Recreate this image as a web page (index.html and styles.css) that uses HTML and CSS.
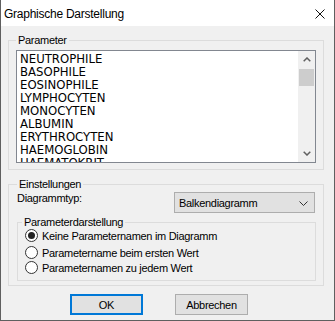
FILE: index.html
```html
<!DOCTYPE html>
<html>
<head>
<meta charset="utf-8">
<link rel="stylesheet" href="styles.css">
</head>
<body>
<div class="window">
  <div class="titlebar">
    <span class="title">Graphische Darstellung</span>
    <svg class="close" width="10" height="10" viewBox="0 0 10 10"><path d="M0.5 0.5 L9.5 9.5 M9.5 0.5 L0.5 9.5" stroke="#111" stroke-width="1" fill="none"/></svg>
  </div>
  <div class="content">
    <div class="group group-param">
      <div class="group-label">Parameter</div>
      <div class="listbox">
        <div class="list-items">
          <div class="item">NEUTROPHILE</div>
          <div class="item">BASOPHILE</div>
          <div class="item">EOSINOPHILE</div>
          <div class="item">LYMPHOCYTEN</div>
          <div class="item">MONOCYTEN</div>
          <div class="item">ALBUMIN</div>
          <div class="item">ERYTHROCYTEN</div>
          <div class="item">HAEMOGLOBIN</div>
          <div class="item">HAEMATOKRIT</div>
        </div>
        <div class="scrollbar">
          <div class="sb-btn"><svg width="8" height="5" viewBox="0 0 8 5"><polyline points="0.7,4.3 4,1 7.3,4.3" fill="none" stroke="#606060" stroke-width="1.5"/></svg></div>
          <div class="sb-track"><div class="sb-thumb"></div></div>
          <div class="sb-btn"><svg width="8" height="5" viewBox="0 0 8 5"><polyline points="0.7,0.7 4,4 7.3,0.7" fill="none" stroke="#606060" stroke-width="1.5"/></svg></div>
        </div>
      </div>
    </div>
    <div class="group group-settings">
      <div class="group-label">Einstellungen</div>
      <div class="type-row">
        <span class="type-label">Diagrammtyp:</span>
        <div class="combo">
          <span>Balkendiagramm</span>
          <svg width="9" height="5" viewBox="0 0 9 5"><polyline points="0.5,0.5 4.5,4.5 8.5,0.5" fill="none" stroke="#333" stroke-width="1"/></svg>
        </div>
      </div>
      <div class="group group-inner">
        <div class="group-label label-inner">Parameterdarstellung</div>
        <div class="radio radio-first"><span class="circle checked"></span><span class="radio-text">Keine Parameternamen im Diagramm</span></div>
        <div class="radio radio-second"><span class="circle"></span><span class="radio-text">Parametername beim ersten Wert</span></div>
        <div class="radio"><span class="circle"></span><span class="radio-text">Parameternamen zu jedem Wert</span></div>
      </div>
    </div>
    <div class="buttons">
      <div class="btn btn-default">OK</div>
      <div class="btn">Abbrechen</div>
    </div>
  </div>
</div>
</body>
</html>
```
FILE: styles.css
```css
* { box-sizing: border-box; }
html, body { margin: 0; padding: 0; background: #f0f0f0; }
.window {
  width: 335px;
  height: 321px;
  border: 1px solid #5f5f5f;
  border-top: none;
  background: #f0f0f0;
  font-family: "Liberation Sans", Arial, sans-serif;
  font-size: 11px;
  letter-spacing: -0.3px;
  color: #000;
  overflow: hidden;
}
.titlebar {
  height: 26px;
  background: #fff;
  display: flex;
  align-items: center;
  padding: 1px 9px 0 3px;
}
.title {
  font-size: 12px;
  letter-spacing: -0.25px;
  flex: 1;
}
.close { display: block; margin-top: 1px; }
.content {
  padding: 0 10px 0 7px;
}
.group {
  border: 1px solid #dcdcdc;
}
.group-label {
  line-height: 13px;
  height: 13px;
  margin-top: -7px;
  background: #f0f0f0;
  padding: 0 2px;
  width: fit-content;
}
.group-param {
  margin-top: 14px;
  padding: 0 7px 6px 7px;
}
.listbox {
  margin-top: 3px;
  height: 113px;
  border: 1px solid #828790;
  background: #fff;
  display: flex;
}
.list-items {
  flex: 1;
  overflow: hidden;
  padding: 1px 0 0 3px;
  font-family: "Liberation Sans Narrow", "DejaVu Sans", sans-serif;
  font-stretch: condensed;
  font-size: 13px;
  letter-spacing: 0;
}
.item {
  height: 13px;
  line-height: 13px;
  white-space: nowrap;
}
.scrollbar {
  width: 17px;
  background: #f0f0f0;
  display: flex;
  flex-direction: column;
}
.sb-btn {
  height: 17px;
  display: flex;
  align-items: center;
  justify-content: center;
}
.sb-track { flex: 1; padding: 1px 1px 0 1px; }
.sb-thumb { height: 17px; background: #cdcdcd; }
.group-settings {
  margin-top: 14px;
  padding: 0 7px 4px 8px;
}
.type-row {
  display: flex;
  align-items: flex-start;
}
.type-label { line-height: 13px; margin-top: 1px; }
.combo {
  margin-left: auto;
  margin-right: 1px;
  margin-top: 1px;
  width: 141px;
  height: 21px;
  border: 1px solid #adadad;
  background: #e1e1e1;
  display: flex;
  align-items: center;
  padding: 0 6px 0 4px;
  justify-content: space-between;
}
.combo svg { display: block; margin-top: 1px; }
.group-inner {
  margin-top: 9px;
  padding: 0 0 4px 7px;
}
.label-inner { margin-left: -3px; }
.radio {
  display: flex;
  align-items: flex-start;
  height: 15px;
}
.radio-first { height: 17px; }
.circle {
  width: 13px;
  height: 13px;
  border: 1px solid #333;
  border-radius: 50%;
  background: #fff;
  display: flex;
  align-items: center;
  justify-content: center;
  flex: none;
}
.circle.checked::after {
  content: "";
  width: 7px;
  height: 7px;
  border-radius: 50%;
  background: #222;
}
.radio-text {
  margin-left: 4px;
  line-height: 13px;
  margin-top: 1px;
}
.buttons {
  display: flex;
  gap: 32px;
  margin-top: 8px;
  padding-left: 62px;
}
.btn {
  width: 73px;
  height: 21px;
  border: 1px solid #adadad;
  background: #e1e1e1;
  display: flex;
  align-items: center;
  justify-content: center;
}
.btn-default { border: 2px solid #0078d7; }
```
